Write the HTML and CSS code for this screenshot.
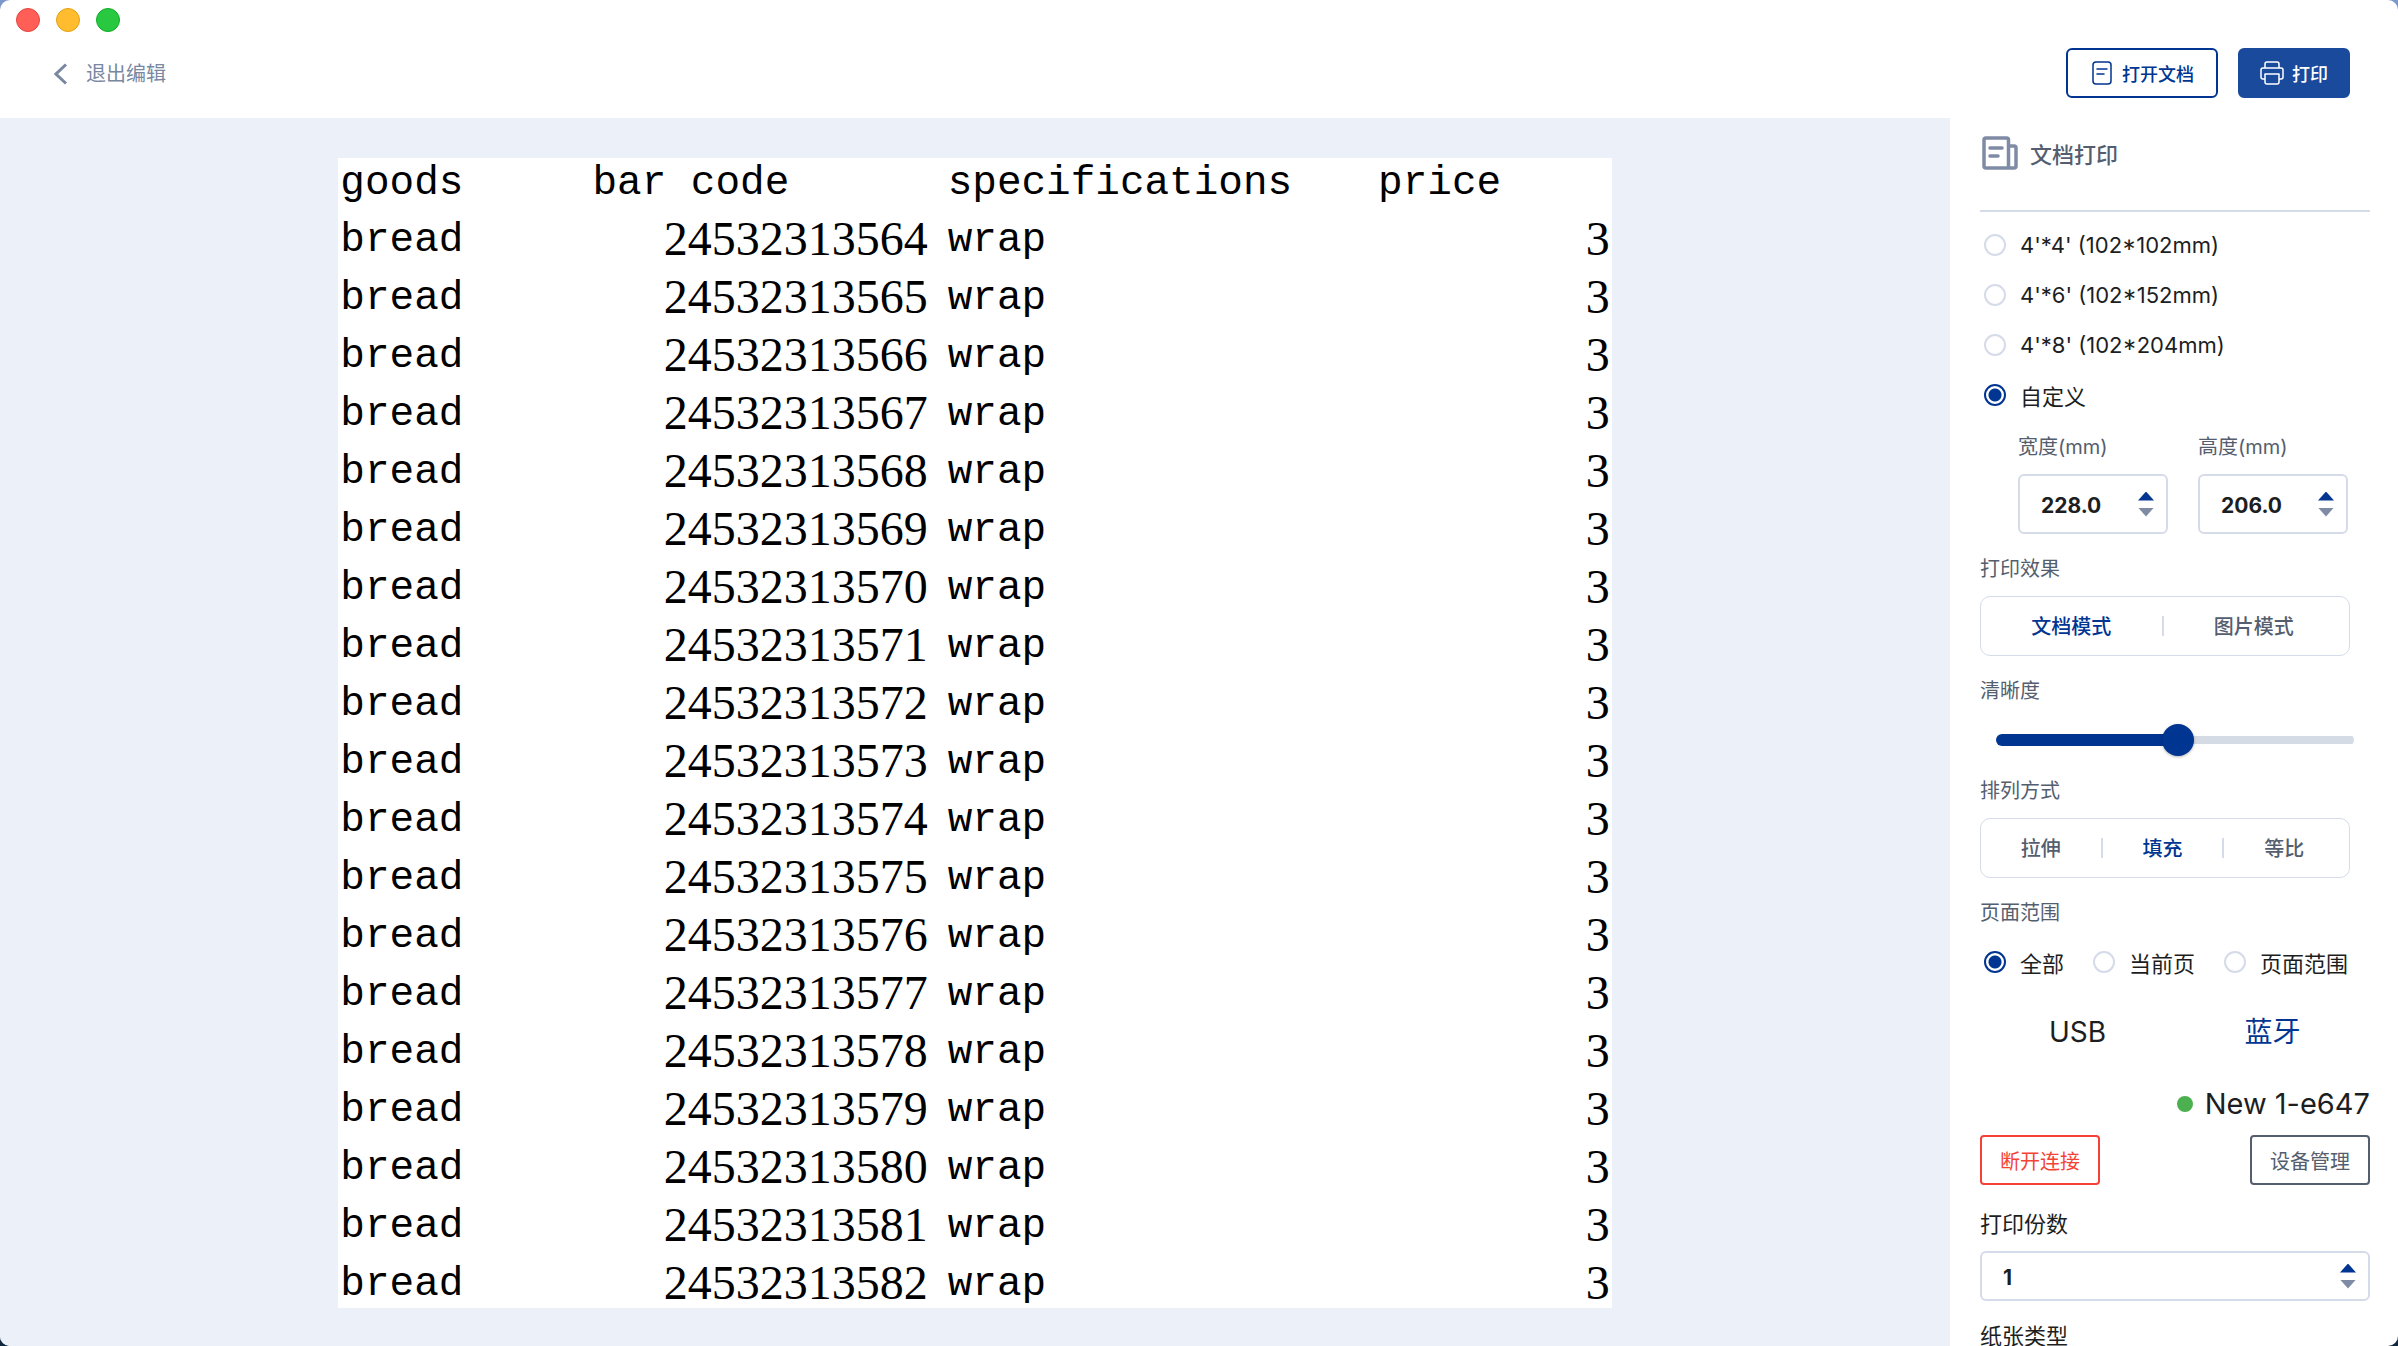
FILE: index.html
```html
<!DOCTYPE html>
<html lang="zh-CN">
<head>
  <meta charset="UTF-8" />
  <meta name="viewport" content="width=device-width, initial-scale=1" />
  <title>文档打印</title>
  <link rel="stylesheet" href="styles.css">
</head>
<body>
  <div class="app">
    <!-- Window bar and top actions -->
    <header class="header">
      <div class="lights">
        <span class="light red"></span>
        <span class="light yellow"></span>
        <span class="light green"></span>
      </div>
      <div class="toolbar">
        <a class="back" href="#">
          <svg width="14" height="22" viewBox="0 0 14 22" fill="none" stroke="currentColor" stroke-width="3"><path d="M12 1.5 2 11l10 9.500"/></svg>
          退出编辑
        </a>
        <div class="actions">
          <button class="btn btn-open" type="button">
            <svg width="20" height="24" viewBox="0 0 20 24" fill="none" stroke="currentColor" stroke-width="1.5" stroke-linecap="round"><rect x="1" y="1" width="18" height="22" rx="3"/><path d="M5 8h10M5 13h7"/></svg>
            打开文档
          </button>
          <button class="btn btn-print" type="button">
            <svg width="24" height="24" viewBox="0 0 24 24" fill="none" stroke="currentColor" stroke-width="1.5" stroke-linejoin="round"><path d="M5 7V3q0-2 2-2h10q2 0 2 2v4M5 18H3q-2 0-2-2V9q0-2 2-2h18q2 0 2 2v7q0 2-2 2h-2"/><path d="M5 13h14v8q0 2-2 2H7q-2 0-2-2z"/></svg>
            打印
          </button>
        </div>
      </div>
    </header>

    <!-- Document preview -->
    <main class="preview">
      <table class="sheet">
        <thead>
          <tr><th>goods</th><th>bar code</th><th>specifications</th><th>price</th></tr>
        </thead>
        <tbody>
          <tr><td>bread</td><td class="num">24532313564</td><td>wrap</td><td class="num">3</td></tr>
          <tr><td>bread</td><td class="num">24532313565</td><td>wrap</td><td class="num">3</td></tr>
          <tr><td>bread</td><td class="num">24532313566</td><td>wrap</td><td class="num">3</td></tr>
          <tr><td>bread</td><td class="num">24532313567</td><td>wrap</td><td class="num">3</td></tr>
          <tr><td>bread</td><td class="num">24532313568</td><td>wrap</td><td class="num">3</td></tr>
          <tr><td>bread</td><td class="num">24532313569</td><td>wrap</td><td class="num">3</td></tr>
          <tr><td>bread</td><td class="num">24532313570</td><td>wrap</td><td class="num">3</td></tr>
          <tr><td>bread</td><td class="num">24532313571</td><td>wrap</td><td class="num">3</td></tr>
          <tr><td>bread</td><td class="num">24532313572</td><td>wrap</td><td class="num">3</td></tr>
          <tr><td>bread</td><td class="num">24532313573</td><td>wrap</td><td class="num">3</td></tr>
          <tr><td>bread</td><td class="num">24532313574</td><td>wrap</td><td class="num">3</td></tr>
          <tr><td>bread</td><td class="num">24532313575</td><td>wrap</td><td class="num">3</td></tr>
          <tr><td>bread</td><td class="num">24532313576</td><td>wrap</td><td class="num">3</td></tr>
          <tr><td>bread</td><td class="num">24532313577</td><td>wrap</td><td class="num">3</td></tr>
          <tr><td>bread</td><td class="num">24532313578</td><td>wrap</td><td class="num">3</td></tr>
          <tr><td>bread</td><td class="num">24532313579</td><td>wrap</td><td class="num">3</td></tr>
          <tr><td>bread</td><td class="num">24532313580</td><td>wrap</td><td class="num">3</td></tr>
          <tr><td>bread</td><td class="num">24532313581</td><td>wrap</td><td class="num">3</td></tr>
          <tr><td>bread</td><td class="num">24532313582</td><td>wrap</td><td class="num">3</td></tr>
        </tbody>
      </table>
    </main>

    <!-- Print settings -->
    <aside class="panel">
      <h1 class="panel-title">
        <svg width="36" height="34" viewBox="0 0 36 34" fill="none" stroke="currentColor" stroke-width="3.5" stroke-linejoin="round"><path d="M26.500 32H4q-2 0-2-2V4q0-2 2-2h20.500q2 0 2 2v28H32q2 0 2-2V12q0-2-2-2h-5.500"/><path d="M8 12h12M8 20h8" stroke-linecap="round"/></svg>
        文档打印
      </h1>

      <div class="sizes">
        <label class="radio"><input type="radio" name="size">4'*4' (102*102mm)</label>
        <label class="radio"><input type="radio" name="size">4'*6' (102*152mm)</label>
        <label class="radio"><input type="radio" name="size">4'*8' (102*204mm)</label>
        <label class="radio"><input type="radio" name="size" checked>自定义</label>
      </div>

      <div class="custom">
        <div class="field">
          <label class="label" for="width">宽度(mm)</label>
          <div class="stepper">
            <input type="number" id="width" value="228.0" step="0.1">
            <div class="arrows">
              <button class="up" type="button" aria-label="增加宽度"></button>
              <button class="down" type="button" aria-label="减少宽度"></button>
            </div>
          </div>
        </div>
        <div class="field">
          <label class="label" for="height">高度(mm)</label>
          <div class="stepper">
            <input type="number" id="height" value="206.0" step="0.1">
            <div class="arrows">
              <button class="up" type="button" aria-label="增加高度"></button>
              <button class="down" type="button" aria-label="减少高度"></button>
            </div>
          </div>
        </div>
      </div>

      <div class="group">
        <div class="label">打印效果</div>
        <div class="segment">
          <button class="active" type="button">文档模式</button>
          <button type="button">图片模式</button>
        </div>
      </div>

      <div class="group">
        <label class="label" for="clarity">清晰度</label>
        <input class="slider" type="range" id="clarity" value="51">
      </div>

      <div class="group">
        <div class="label">排列方式</div>
        <div class="segment">
          <button type="button">拉伸</button>
          <button class="active" type="button">填充</button>
          <button type="button">等比</button>
        </div>
      </div>

      <div class="label">页面范围</div>
      <div class="range">
        <label class="radio"><input type="radio" name="range" checked>全部</label>
        <label class="radio"><input type="radio" name="range">当前页</label>
        <label class="radio"><input type="radio" name="range">页面范围</label>
      </div>

      <div class="tabs">
        <button type="button">USB</button>
        <button class="active" type="button">蓝牙</button>
      </div>

      <div class="device"><span class="dot"></span>New 1-e647</div>
      <div class="device-actions">
        <button class="btn-small danger" type="button">断开连接</button>
        <button class="btn-small" type="button">设备管理</button>
      </div>

      <label class="label-dark" for="copies">打印份数</label>
      <div class="stepper copies">
        <input type="number" id="copies" value="1">
        <div class="arrows">
          <button class="up" type="button" aria-label="增加份数"></button>
          <button class="down" type="button" aria-label="减少份数"></button>
        </div>
      </div>
      <div class="label-dark">纸张类型</div>
    </aside>
  </div>
</body>
</html>
```

FILE: styles.css
```css
* {
  box-sizing: border-box;
}

html, body {
  margin: 0;
  height: 100%;
  overflow: hidden;
  background: linear-gradient(#7d97cc, #12283f);
  font-family: Inter, "Noto Sans CJK SC", sans-serif;
  color: #1c1e22;
}

button, input {
  font-family: inherit;
  color: inherit;
  margin: 0;
  padding: 0;
  border: none;
  background: none;
}

button {
  cursor: pointer;
}

.app {
  height: 100vh;
  display: grid;
  grid-template-columns: 1fr 448px;
  grid-template-rows: 118px 1fr;
  background: #fff;
  border-radius: 10px;
  overflow: hidden;
}

/* Header */
.header {
  grid-column: 1 / 3;
  padding: 8px 48px 0 16px;
}

.lights {
  display: flex;
  gap: 16px;
}

.light {
  width: 24px;
  height: 24px;
  border-radius: 50%;
}

.red {
  background: #ff5f57;
  border: 1px solid #e2463f;
}

.yellow {
  background: #febc2e;
  border: 1px solid #e1a116;
}

.green {
  background: #28c840;
  border: 1px solid #12ac28;
}

.toolbar {
  display: flex;
  justify-content: space-between;
  align-items: center;
  padding: 16px 0 0 38px;
}

.back {
  display: flex;
  align-items: center;
  gap: 18px;
  padding-top: 2px;
  font-size: 20px;
  line-height: 30px;
  color: #7987a1;
  text-decoration: none;
}

.actions {
  display: flex;
  gap: 20px;
}

.btn {
  display: flex;
  align-items: center;
  height: 50px;
  padding: 0 20px;
  gap: 8px;
  border: 2px solid #003591;
  border-radius: 6px;
  font-size: 18px;
  font-weight: 500;
}

.btn-open {
  padding: 0 22px 0 24px;
  gap: 10px;
  color: #003591;
}

.btn-print {
  background: #1a4a9c;
  border-color: #1a4a9c;
  color: #fff;
}

/* Preview */
.preview {
  background: #ebf0f9;
  padding-top: 40px;
}

.sheet {
  width: 65.3%;
  margin: 0 auto;
  table-layout: fixed;
  border-collapse: collapse;
  background: #fff;
  color: #000;
  font-family: "Liberation Mono", monospace;
  font-size: 41px;
  line-height: 48px;
}

.sheet th, .sheet td {
  height: 58px;
  padding: 0 2px;
  text-align: left;
  font-weight: normal;
  vertical-align: bottom;
  white-space: nowrap;
}

.sheet th {
  height: 48px;
  width: 18.5%;
  line-height: 46px;
}

.sheet th:nth-child(1) {
  width: 19.8%;
}

.sheet th:nth-child(2) {
  width: 27.9%;
}

.sheet th:nth-child(3) {
  width: 33.8%;
}

.sheet .num {
  text-align: right;
  font-family: "Liberation Serif", serif;
  font-size: 48px;
  line-height: 50px;
}

.sheet .num:nth-child(2) {
  padding-right: 18px;
}

/* Settings panel */
.panel {
  padding: 16px 28px 0 30px;
  overflow: hidden;
}

.panel-title {
  display: flex;
  align-items: center;
  gap: 12px;
  height: 78px;
  margin: 0 0 8px;
  padding: 0 0 38px 2px;
  border-bottom: 2px solid #d5dbe8;
  font-size: 22px;
  font-weight: 500;
  color: #545e6e;
}

.panel-title svg {
  color: #7f8ba5;
}

.radio {
  display: flex;
  align-items: center;
  gap: 14px;
  height: 50px;
  font-size: 22px;
}

.radio input {
  appearance: none;
  flex: none;
  width: 22px;
  height: 22px;
  border: 2px solid #d5dbe8;
  border-radius: 50%;
}

.radio input:checked {
  border-color: #003591;
  background: radial-gradient(circle, #003591 6px, transparent 7px);
}

.sizes {
  padding-left: 4px;
}

.custom {
  display: flex;
  gap: 30px;
  padding: 12px 0 20px 38px;
}

.label {
  display: block;
  font-size: 20px;
  line-height: 30px;
  color: #545e6e;
}

.stepper {
  display: flex;
  align-items: center;
  justify-content: space-between;
  width: 150px;
  height: 60px;
  margin-top: 12px;
  padding: 0 12px 0 21px;
  border: 2px solid #d5dbe8;
  border-radius: 6px;
}

.stepper input {
  flex: 1;
  min-width: 0;
  padding-top: 2px;
  appearance: textfield;
  outline: none;
  font-size: 21px;
  font-weight: 700;
}

.stepper input::-webkit-inner-spin-button {
  appearance: none;
}

.arrows {
  display: flex;
  flex-direction: column;
  gap: 7px;
}

.up, .down {
  width: 16px;
  height: 9px;
  background: #003591;
  clip-path: polygon(50% 0, 100% 100%, 0 100%);
}

.down {
  background: #7f8ba5;
  clip-path: polygon(0 0, 100% 0, 50% 100%);
}

.group {
  margin-bottom: 20px;
}

.segment {
  display: flex;
  align-items: center;
  width: 370px;
  height: 60px;
  margin-top: 12px;
  padding-right: 5px;
  border: 1px solid #d5dbe8;
  border-radius: 10px;
}

.segment button {
  flex: 1;
  height: 20px;
  padding-top: 1px;
  font-size: 20px;
  line-height: 20px;
  font-weight: 500;
  color: #545e6e;
}

.segment button + button {
  border-left: 2px solid #d5dbe8;
}

.segment .active {
  color: #003591;
}

.slider {
  appearance: none;
  display: block;
  width: 358px;
  height: 32px;
  margin: 18px 16px 0;
}

.slider::-webkit-slider-runnable-track {
  height: 12px;
  border-radius: 6px;
  background:
    linear-gradient(#003591, #003591) left center / 50% 12px no-repeat,
    linear-gradient(#d5dbe5, #d5dbe5) right center / 50% 8px no-repeat;
}

.slider::-webkit-slider-thumb {
  appearance: none;
  width: 32px;
  height: 32px;
  margin-top: -10px;
  border-radius: 50%;
  background: #003591;
  box-shadow: 0 1px 3px rgba(0, 0, 0, 0.3);
}

.range {
  display: flex;
  gap: 29px;
  padding: 9px 0 0 4px;
}

.tabs {
  display: flex;
  padding-top: 20px;
}

.tabs button {
  flex: 1;
  font-size: 28px;
  line-height: 50px;
}

.tabs .active {
  color: #003591;
}

.device {
  display: flex;
  align-items: center;
  justify-content: flex-end;
  gap: 12px;
  margin: 22px 0 6px;
  font-size: 29px;
  line-height: 50px;
}

.dot {
  width: 16px;
  height: 16px;
  border-radius: 50%;
  background: #4caf50;
}

.device-actions {
  display: flex;
  justify-content: space-between;
  margin-bottom: 24px;
}

.btn-small {
  width: 120px;
  height: 50px;
  border: 2px solid #545e6e;
  border-radius: 4px;
  font-size: 20px;
  color: #545e6e;
}

.danger {
  border-color: #f44336;
  color: #f44336;
}

.label-dark {
  display: block;
  font-size: 22px;
  line-height: 30px;
}

.copies {
  width: 100%;
  height: 50px;
  margin-bottom: 20px;
}
```
